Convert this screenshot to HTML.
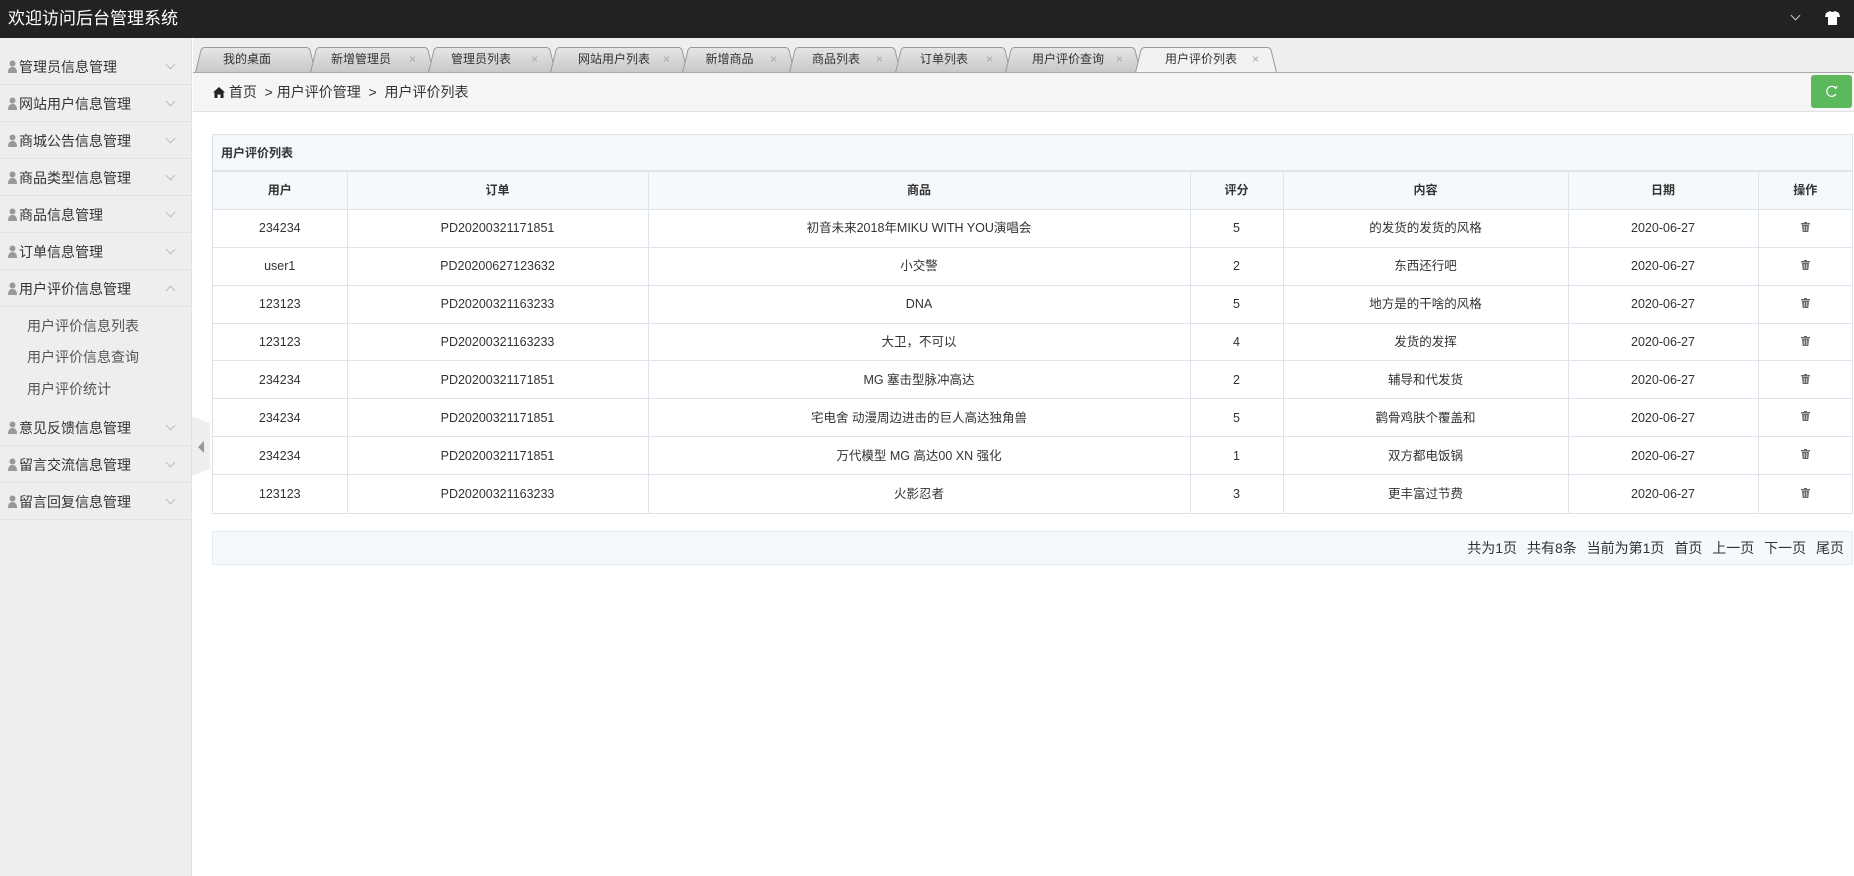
<!DOCTYPE html>
<html><head><meta charset="utf-8"><style>
*{margin:0;padding:0;box-sizing:border-box}
body{width:1854px;height:876px;overflow:hidden;background:#fff;font-family:"Liberation Sans","Noto Sans CJK SC",sans-serif;color:#333;position:relative}
.hdr{position:absolute;left:0;top:0;width:1854px;height:38px;background:#222}
.hdr .t{position:absolute;left:8px;top:9px;color:#fff;font-size:17px;line-height:20px}
.side{position:absolute;left:0;top:38px;width:192px;height:838px;background:#eee;border-right:1px solid #e2e2e2}
.mi{position:absolute;left:0;width:192px;height:37px;border-bottom:1px solid #e2e2e2;font-size:14px;line-height:38px;padding-left:8px;color:#333}
.mi .ic{display:inline-block;width:9px;height:13px;vertical-align:-1px;margin-right:2px}
.mi .ar{position:absolute;right:18px;top:13px;width:7px;height:7px;border-right:1px solid #bbb;border-bottom:1px solid #bbb;transform:rotate(45deg)}
.mi .up{transform:rotate(-135deg);top:17px}
.sub{position:absolute;left:27px;font-size:14px;color:#555;line-height:20px}
.tabbar{position:absolute;left:193px;top:38px;width:1661px;height:35px;background:#eee}
.tab{position:absolute;top:47px;height:25px;font-size:12px;color:#333;line-height:25px}
.tab svg{position:absolute;left:0;top:0}
.tab span{position:relative}
.bc{position:absolute;left:193px;top:72px;width:1661px;height:40px;background:#f5f5f5;border-top:1px solid #aaa;border-bottom:1px solid #e2e2e2;font-size:14px;line-height:38px}
.ref{position:absolute;left:1811px;top:75px;width:41px;height:33px;background:#5cb85c;border-radius:3px}
.panel{position:absolute;left:212px;top:134px;width:1641px;border:1px solid #dde3ea}
.ptitle{height:36px;background:#f5f9fc;font-size:12px;font-weight:bold;line-height:36px;padding-left:8px;border-bottom:1px solid #dde3ea}
table{border-collapse:collapse;width:100%;font-size:12.5px}
td,th{border:1px solid #dde3ea;text-align:center;height:37.9px;padding:0;line-height:14px;vertical-align:middle}
th{background:#f5f9fc;font-weight:bold;font-size:12px}
tr td:first-child,tr th:first-child{border-left:none}
tr td:last-child,tr th:last-child{border-right:none}
tr:last-child td{border-bottom:none}
.pg{position:absolute;left:212px;top:531px;width:1641px;height:34px;background:#f5f9fc;border:1px solid #e6ebf0;font-size:14px;line-height:32px;text-align:right;padding-right:8px;color:#333}
.pg span{margin-left:6px}
.handle{position:absolute;left:192px;top:416px;width:18px;height:60px;background:#eee;clip-path:polygon(0 0,100% 12%,100% 88%,0 100%)}
</style></head><body>
<div class="hdr"><div class="t">欢迎访问后台管理系统</div>
<div style="position:absolute;left:1792px;top:12px;width:7px;height:7px;border-right:1px solid #ccc;border-bottom:1px solid #ccc;transform:rotate(45deg)"></div>
<svg style="position:absolute;left:1825px;top:11px" width="15" height="14" viewBox="0 0 15 14"><path d="M5 0 L1 2 L0 6 L3 6 L3 14 L12 14 L12 6 L15 6 L14 2 L10 0 Q7.5 2 5 0Z" fill="#fff"/></svg>
</div>
<div class="side"></div>
<div id="menu"></div>
<div class="handle"></div>
<div style="position:absolute;left:198px;top:441px;width:0;height:0;border-top:6px solid transparent;border-bottom:6px solid transparent;border-right:6px solid #999"></div>
<div class="tabbar"></div>
<div id="tabs"></div>
<div class="bc"><svg style="margin-left:20px;vertical-align:-1px" width="12" height="11" viewBox="0 0 12 11"><path d="M6 0 L0 5.5 L1.5 5.5 L1.5 11 L4.5 11 L4.5 7.5 L7.5 7.5 L7.5 11 L10.5 11 L10.5 5.5 L12 5.5Z" fill="#222"/></svg> 首页 &nbsp;&gt; 用户评价管理 &nbsp;&gt;&nbsp; 用户评价列表</div>
<div class="ref"><svg width="41" height="33" viewBox="0 0 41 33"><path d="M24.5 13 A5 5 0 1 0 25 19" fill="none" stroke="#fff" stroke-width="1.2"/><path d="M23 11.5 L25 13.5 L26 11" fill="none" stroke="#fff" stroke-width="1"/></svg></div>
<div class="panel"><div class="ptitle">用户评价列表</div>
<table>
<tr><th style="width:134px">用户</th><th style="width:301px">订单</th><th style="width:542px">商品</th><th style="width:93px">评分</th><th style="width:285px">内容</th><th style="width:190px">日期</th><th>操作</th></tr>
<tbody id="rows"></tbody>
</table></div>
<div class="pg">共为1页 <span>共有8条</span> <span>当前为第1页</span> <span>首页</span> <span>上一页</span> <span>下一页</span> <span>尾页</span></div>
<script>
var m=[["管理员信息管理",48],["网站用户信息管理",85],["商城公告信息管理",122],["商品类型信息管理",159],["商品信息管理",196],["订单信息管理",233],["用户评价信息管理",270,1],["意见反馈信息管理",409],["留言交流信息管理",446],["留言回复信息管理",483]];
var ic='<svg class="ic" viewBox="0 0 9 13"><circle cx="4.5" cy="3.5" r="3" fill="#999"/><path d="M0 13 Q0 7 4.5 7 Q9 7 9 13Z" fill="#999"/></svg>';
var h='';m.forEach(function(x){h+='<div class="mi" style="top:'+x[1]+'px">'+ic+x[0]+'<i class="ar'+(x[2]?' up':'')+'"></i></div>';});
[["用户评价信息列表",326],["用户评价信息查询",357],["用户评价统计",389]].forEach(function(x){h+='<div class="sub" style="top:'+(x[1]-10)+'px">'+x[0]+'</div>';});
document.getElementById('menu').innerHTML=h;
var t=[["我的桌面",195,310],["新增管理员",310,428],["管理员列表",428,550],["网站用户列表",550,682],["新增商品",682,789],["商品列表",789,895],["订单列表",895,1005],["用户评价查询",1005,1135],["用户评价列表",1135,1271,1]];
h='<svg width="0" height="0" style="position:absolute"><defs><linearGradient id="g" x1="0" y1="0" x2="0" y2="1"><stop offset="0" stop-color="#e6e6e6"/><stop offset="1" stop-color="#c8c8c8"/></linearGradient></defs></svg>';
t.forEach(function(x,i){var w=x[2]-x[1]+6,a=x[3];var fill=a?'#f2f2f2':'url(#g)';
h+='<div class="tab" style="left:'+x[1]+'px;width:'+w+'px"><svg width="'+w+'" height="26"><path d="M0.5 25.5 L6 3 Q7 0.5 10 0.5 L'+(w-10)+' 0.5 Q'+(w-7)+' 0.5 '+(w-6)+' 3 L'+(w-0.5)+' 25.5" fill="'+fill+'" stroke="#999"/></svg><span style="margin-left:'+(i==0?28:(w-6)/2-38+(x[0].length<5?8:0))+'px">'+x[0]+'</span>'+(i?'<span style="position:absolute;right:18px;color:#aaa">×</span>':'')+'</div>';});
document.getElementById('tabs').innerHTML=h;
var r=[["234234","PD20200321171851","初音未来2018年MIKU WITH YOU演唱会","5","的发货的发货的风格"],["user1","PD20200627123632","小交警","2","东西还行吧"],["123123","PD20200321163233","DNA","5","地方是的干啥的风格"],["123123","PD20200321163233","大卫，不可以","4","发货的发挥"],["234234","PD20200321171851","MG 塞击型脉冲高达","2","辅导和代发货"],["234234","PD20200321171851","宅电舍 动漫周边进击的巨人高达独角兽","5","鹳骨鸡肤个覆盖和"],["234234","PD20200321171851","万代模型 MG 高达00 XN 强化","1","双方都电饭锅"],["123123","PD20200321163233","火影忍者","3","更丰富过节费"]];
var trash='<svg width="9" height="10" viewBox="0 0 9 10" style="vertical-align:middle;margin-top:-4px"><rect x="0" y="1" width="9" height="1.5" fill="#666"/><rect x="3" y="0" width="3" height="1.5" fill="#666"/><path d="M1 3 L8 3 L7.3 10 L1.7 10Z" fill="#666"/><path d="M3.2 4 V9 M5.8 4 V9" stroke="#fff" stroke-width="0.7"/></svg>';
h='';r.forEach(function(x){h+='<tr><td>'+x[0]+'</td><td>'+x[1]+'</td><td>'+x[2]+'</td><td>'+x[3]+'</td><td>'+x[4]+'</td><td>2020-06-27</td><td>'+trash+'</td></tr>';});
document.getElementById('rows').innerHTML=h;
</script>
</body></html>
